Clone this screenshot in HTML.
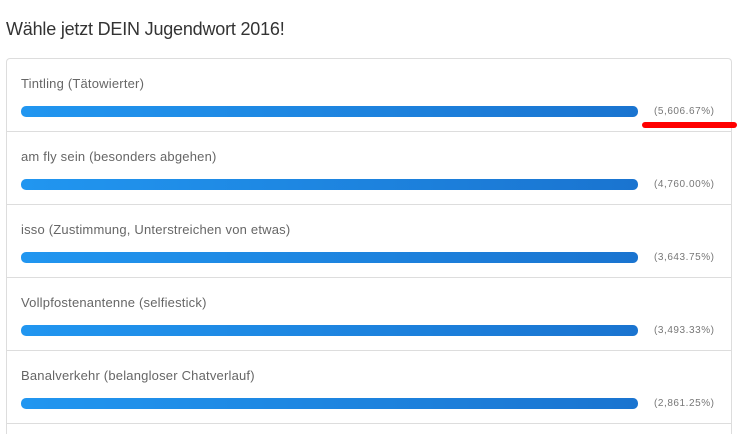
<!DOCTYPE html>
<html><head><style>
html,body{margin:0;width:751px;height:434px;overflow:hidden}
body{background:#fff;font-family:"Liberation Sans",sans-serif;position:relative}
h1{position:absolute;left:6px;top:19px;margin:0;font-size:18px;font-weight:normal;color:#333;letter-spacing:-0.2px}
.panel{position:absolute;left:6px;top:58px;width:724px;height:376px;border:1px solid #ddd;border-bottom:none;border-radius:4px 4px 0 0;overflow:hidden}
.row{position:relative;height:72px;border-bottom:1px solid #ddd}
.lab{position:absolute;left:14px;top:17px;font-size:13px;color:#666;letter-spacing:0.2px}
.bar{position:absolute;left:14px;top:47px;width:617px;height:11px;border-radius:5px;background:linear-gradient(90deg,#2196f0,#1a74d0)}
.pct{position:absolute;left:647px;top:47px;font-size:10px;color:#777;letter-spacing:0.55px}
.red{position:absolute;left:642px;top:122px;width:95px;height:6px;background:#f00;border-radius:3px}
</style></head><body>
<h1>Wähle jetzt DEIN Jugendwort 2016!</h1>
<div class="panel">
<div class="row"><div class="lab">Tintling (Tätowierter)</div><div class="bar"></div><div class="pct">(5,606.67%)</div></div>
<div class="row"><div class="lab">am fly sein (besonders abgehen)</div><div class="bar"></div><div class="pct">(4,760.00%)</div></div>
<div class="row"><div class="lab">isso (Zustimmung, Unterstreichen von etwas)</div><div class="bar"></div><div class="pct">(3,643.75%)</div></div>
<div class="row"><div class="lab">Vollpfostenantenne (selfiestick)</div><div class="bar"></div><div class="pct">(3,493.33%)</div></div>
<div class="row"><div class="lab">Banalverkehr (belangloser Chatverlauf)</div><div class="bar"></div><div class="pct">(2,861.25%)</div></div>
</div>
<div class="red"></div>
</body></html>
